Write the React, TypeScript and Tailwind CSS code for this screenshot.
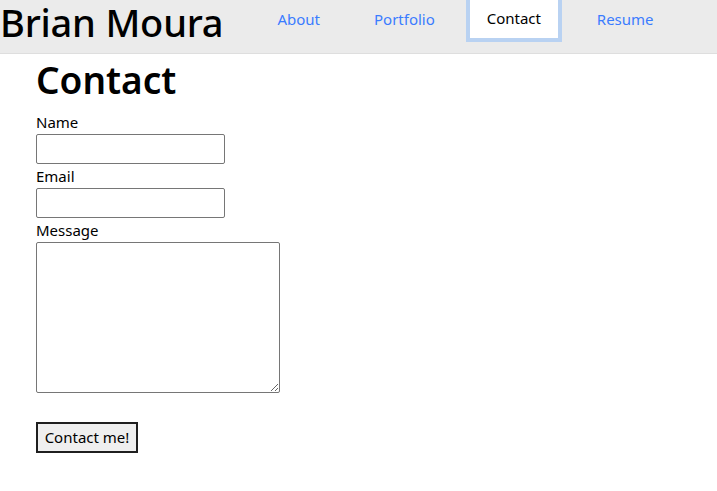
const links = ["About", "Portfolio", "Contact", "Resume"];

export default function App() {
  return (
    <div className="min-h-screen bg-white text-black font-['Noto_Sans',sans-serif]">
      <header className="flex h-[54px] items-start border-b border-[#dedede] bg-[#ebebeb]">
        <h1 className="text-[38px] leading-[44px] font-medium tracking-[-0.2px]">Brian Moura</h1>
        <nav className="ml-[27px] flex">
          {links.map((l) =>
            l === "Contact" ? (
              <a
                key={l}
                className="ml-[4px] mr-[8px] flex h-[42px] w-[96px] items-center justify-center border-4 border-t-0 border-[#b9d2f2] bg-white pb-[2px] text-[15px] text-black"
              >
                {l}
              </a>
            ) : (
              <a key={l} className="flex h-[38px] items-center px-[27px] text-[15px] text-[#3a7cff]">
                {l}
              </a>
            )
          )}
        </nav>
      </header>
      <main className="px-[36px]">
        <h2 className="mt-[2px] pb-[6px] text-[37px] leading-[48px] font-semibold">Contact</h2>
        <form className="flex flex-col items-start text-[15px]">
          <label className="leading-[24px]">Name</label>
          <input className="h-[30px] w-[189px] rounded-[2px] border border-[#767676]" />
          <label className="leading-[24px]">Email</label>
          <input className="h-[30px] w-[189px] rounded-[2px] border border-[#767676]" />
          <label className="leading-[24px]">Message</label>
          <textarea className="h-[151px] w-[244px] rounded-[2px] border border-[#767676]" />
          <button
            type="button"
            className="mt-[29px] h-[31px] w-[102px] border-2 border-[#1f1f1f] bg-[#efefef] text-[15px]"
          >
            Contact me!
          </button>
        </form>
      </main>
    </div>
  );
}
